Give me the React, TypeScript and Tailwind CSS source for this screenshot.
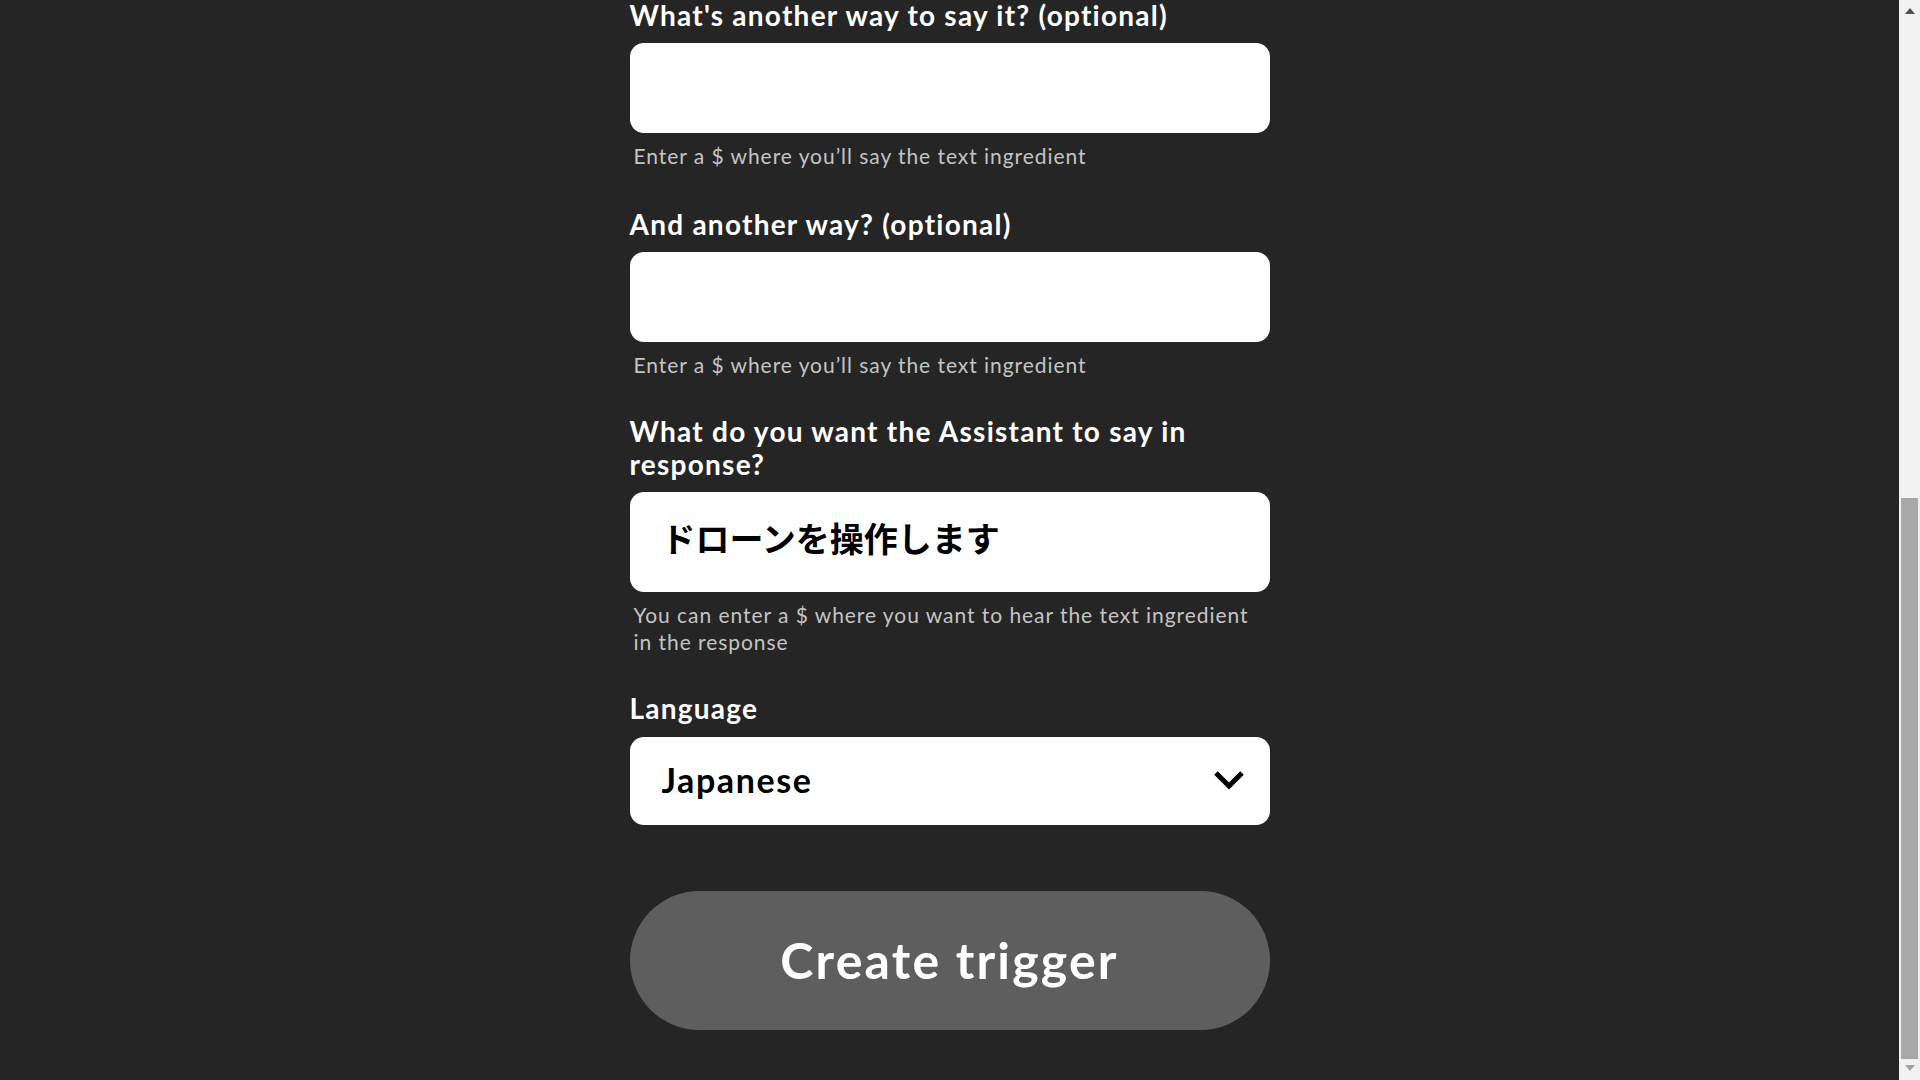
import React from 'react';

const font = "font-['Lato','Noto_Sans_CJK_JP',sans-serif]";

interface FieldProps {
  label: React.ReactNode;
  help: React.ReactNode;
  value?: string;
  tall?: boolean;
}

const Field: React.FC<FieldProps> = ({ label, help, value = '', tall }) => {
  return (
    <div className="flex flex-col">
      <label className="text-[28px] leading-[33px] font-bold tracking-[1.25px] text-white">{label}</label>
      <input
        type="text"
        defaultValue={value}
        className={`mt-[11px] w-full rounded-[14px] bg-white px-8 text-[34px] font-bold text-black outline-none ${font} ${
          tall ? 'h-[100px] pb-[10px]' : 'h-[90px]'
        }`}
      />
      <p className="mt-[9px] pl-1 text-[21px] leading-[27px] tracking-[0.95px] text-[#c4c4c4]">{help}</p>
    </div>
  );
};

const Scrollbar: React.FC = () => (
  <div className="flex h-screen w-[21px] shrink-0 flex-col bg-[#f1f1f1]">
    <div className="flex h-[21px] items-start justify-center pt-[8px]">
      <svg width="10" height="6" viewBox="0 0 10 6">
        <polygon points="0,6 5,0 10,6" fill="#505050" />
      </svg>
    </div>
    <div className="flex flex-1 flex-col justify-end">
      <div className="mx-[2px] h-[561px] bg-[#a8a8a8]" />
    </div>
    <div className="flex h-[21px] items-start justify-center pt-[6px]">
      <svg width="10" height="6" viewBox="0 0 10 6">
        <polygon points="0,0 10,0 5,6" fill="#a3a3a3" />
      </svg>
    </div>
  </div>
);

export default function App() {
  return (
    <div className={`flex h-screen w-full overflow-hidden bg-[#252525] ${font}`}>
      <main className="flex flex-1 justify-center">
        <div className="mt-[-1px] flex w-[640px] flex-col">
          <Field
            label="What's another way to say it? (optional)"
            help="Enter a $ where you’ll say the text ingredient"
          />
          <div className="mt-[39px]">
            <Field
              label="And another way? (optional)"
              help="Enter a $ where you’ll say the text ingredient"
            />
          </div>
          <div className="mt-[37px]">
            <Field
              label={
                <>
                  What do you want the Assistant to say in
                  <br />
                  response?
                </>
              }
              value="ドローンを操作します"
              tall
              help={
                <>
                  You can enter a $ where you want to hear the text ingredient
                  <br />
                  in the response
                </>
              }
            />
          </div>
          <div className="mt-[37px] flex flex-col">
            <label className="text-[28px] leading-[33px] font-bold tracking-[1.25px] text-white">Language</label>
            <div className="mt-[12px] flex h-[88px] items-center justify-between rounded-[14px] bg-white pb-[3px] pl-8 pr-[25px]">
              <span className="text-[34px] font-bold tracking-[1.6px] text-black">Japanese</span>
              <svg width="32" height="20" viewBox="0 0 32 20">
                <polyline
                  points="3,3 16,16 29,3"
                  fill="none"
                  stroke="#000"
                  strokeWidth="5"
                  strokeLinejoin="miter"
                />
              </svg>
            </div>
          </div>
          <button className="mt-[66px] h-[139px] w-full rounded-full bg-[#5e5e5e] text-[50px] font-bold tracking-[2.2px] text-white">
            Create trigger
          </button>
        </div>
      </main>
      <Scrollbar />
    </div>
  );
}
